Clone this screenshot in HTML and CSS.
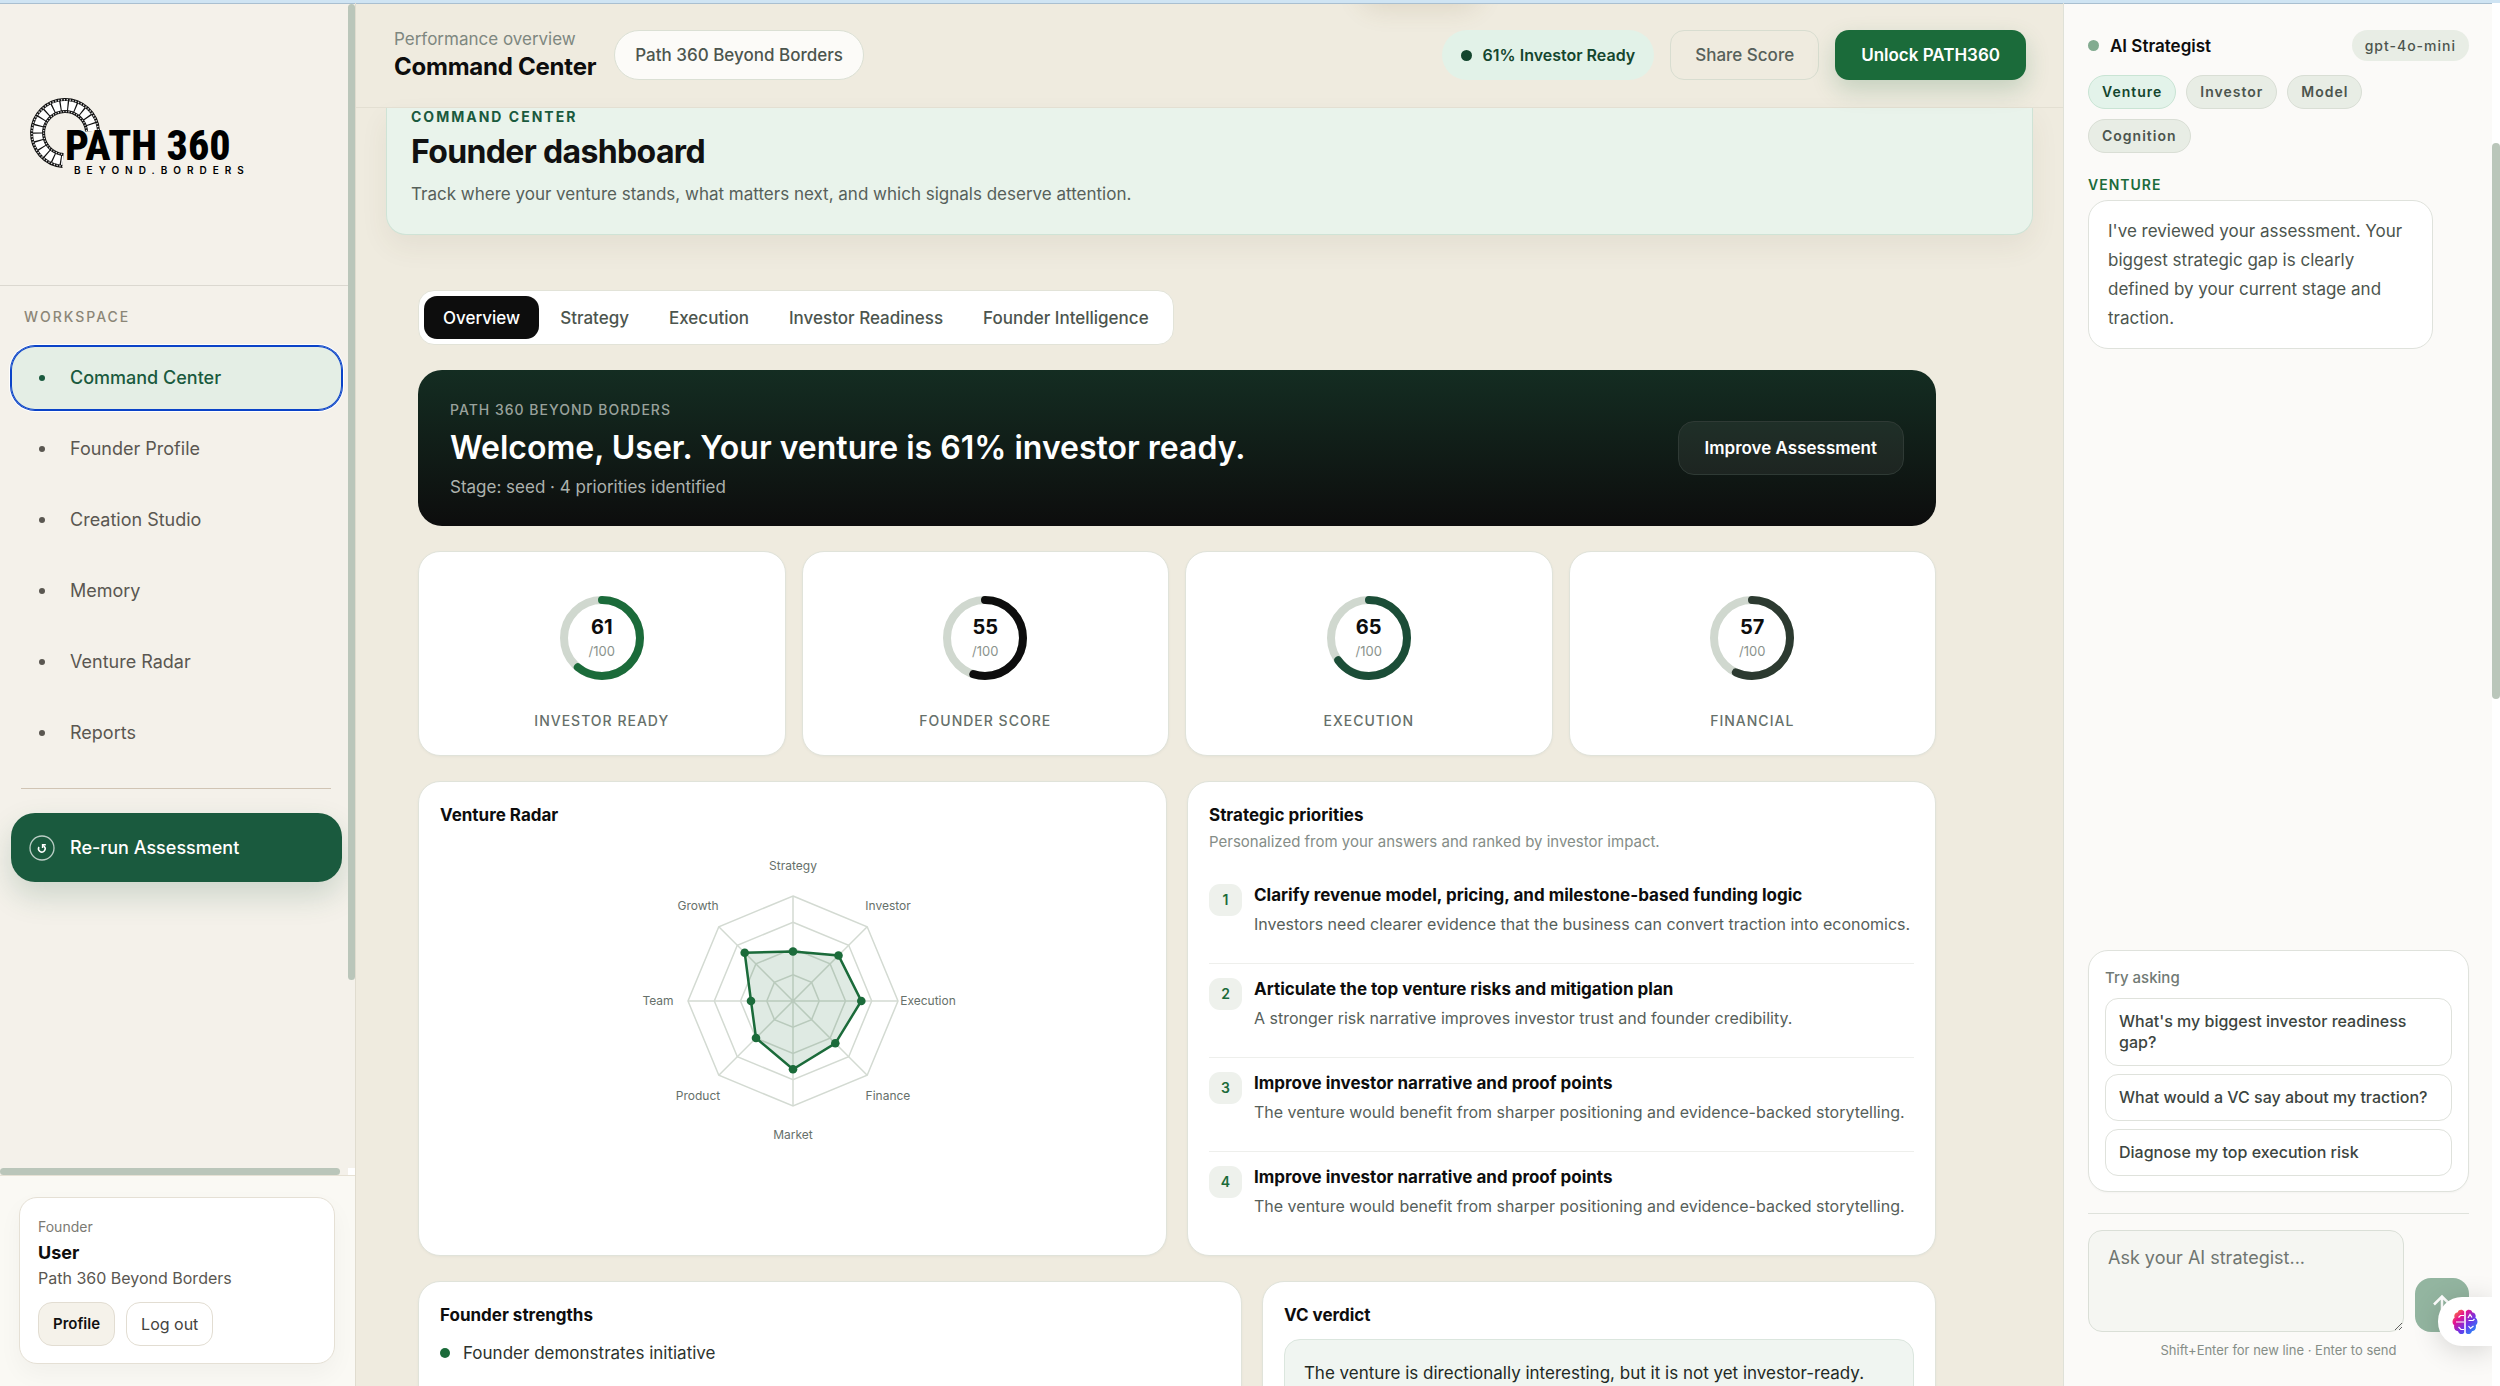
FILE: index.html
```html
<!DOCTYPE html>
<html lang="en">
<head>
    <meta charset="utf-8">
    <title>Command Center - PATH 360</title>
    <link rel="stylesheet" href="styles.css">
</head>
<body>
    <div class="app">
        <!-- Sidebar -->
        <aside class="sidebar">
            <div class="sidebar-scroll">
                <div class="brand">
                    <svg class="brand-logo" viewBox="0 0 230 80" role="img" aria-label="PATH 360 Beyond Borders">
                        <g fill="none">
                            <path d="M63.500 34 A27.500 27.500 0 1 0 34 63.400" stroke="#111" stroke-width="15"/>
                            <path d="M63.500 34 A27.500 27.500 0 1 0 34 63.400" stroke="#fff" stroke-width="9" stroke-dasharray="6.500 1.200"/>
                            <path d="M69.300 33 A33.300 33.300 0 1 0 34 69.200" stroke="#ddd" stroke-width="1.500" stroke-dasharray="1.300 1.600"/>
                            <path d="M57.500 34 A21.500 21.500 0 1 0 34 57.400" stroke="#ddd" stroke-width="1.300" stroke-dasharray="1.200 1.500"/>
                        </g>
                        <text x="36" y="63" class="brand-name">PATH 360</text>
                        <text x="45" y="77" class="brand-sub">BEYOND.BORDERS</text>
                    </svg>
                </div>
                <nav class="nav">
                    <h2 class="nav-title">Workspace</h2>
                    <a class="nav-item active" href="#command"><span class="nav-dot"></span>Command Center</a>
                    <a class="nav-item" href="#profile"><span class="nav-dot"></span>Founder Profile</a>
                    <a class="nav-item" href="#studio"><span class="nav-dot"></span>Creation Studio</a>
                    <a class="nav-item" href="#memory"><span class="nav-dot"></span>Memory</a>
                    <a class="nav-item" href="#radar"><span class="nav-dot"></span>Venture Radar</a>
                    <a class="nav-item" href="#reports"><span class="nav-dot"></span>Reports</a>
                    <hr class="nav-divider">
                    <button class="rerun" type="button">
                        <svg width="26" height="26" viewBox="0 0 26 26" fill="none" stroke="#fff">
                            <circle cx="13" cy="13" r="12" stroke-opacity=".7" stroke-width="1.300"/>
                            <path d="M10 12 A3.300 3.300 0 1 0 15.300 11.500 L14 10.500" stroke-width="1.500"/>
                            <path d="M16.800 9.800 H13.600 V13" stroke-width="1.500"/>
                        </svg>
                        Re-run Assessment
                    </button>
                </nav>
                <span class="thumb thumb-y"></span>
                <span class="thumb thumb-x"></span>
                <span class="thumb-corner"></span>
            </div>
            <div class="sidebar-footer">
                <div class="user-card">
                    <span class="user-role">Founder</span>
                    <strong class="user-name">User</strong>
                    <span class="user-org">Path 360 Beyond Borders</span>
                    <div class="user-actions">
                        <button class="small-btn filled" type="button">Profile</button>
                        <button class="small-btn" type="button">Log out</button>
                    </div>
                </div>
            </div>
        </aside>

        <!-- Main -->
        <main class="main">
            <header class="topbar">
                <div class="topbar-title">
                    <span>Performance overview</span>
                    <strong>Command Center</strong>
                </div>
                <span class="org-pill">Path 360 Beyond Borders</span>
                <div class="topbar-actions">
                    <span class="ready-pill"><i></i>61% Investor Ready</span>
                    <button class="share-btn" type="button">Share Score</button>
                    <button class="unlock-btn" type="button">Unlock PATH360</button>
                </div>
                <span class="toast-shadow"></span>
            </header>

            <div class="page">
                <section class="intro">
                    <span class="intro-tag">Command Center</span>
                    <h1>Founder dashboard</h1>
                    <p>Track where your venture stands, what matters next, and which signals deserve attention.</p>
                </section>

                <div class="content">
                    <div class="tabs" role="tablist">
                        <button class="tab active" role="tab" aria-selected="true">Overview</button>
                        <button class="tab" role="tab">Strategy</button>
                        <button class="tab" role="tab">Execution</button>
                        <button class="tab" role="tab">Investor Readiness</button>
                        <button class="tab" role="tab">Founder Intelligence</button>
                    </div>

                    <section class="welcome">
                        <div>
                            <span class="welcome-tag">Path 360 Beyond Borders</span>
                            <h2>Welcome, User. Your venture is 61% investor ready.</h2>
                            <p>Stage: seed · 4 priorities identified</p>
                        </div>
                        <button class="improve-btn" type="button">Improve Assessment</button>
                    </section>

                    <section class="scores">
                        <article class="card score">
                            <div class="ring">
                                <svg viewBox="0 0 84 84">
                                    <circle class="ring-track" cx="42" cy="42" r="38"/>
                                    <circle class="ring-value green" cx="42" cy="42" r="38" pathLength="100" stroke-dasharray="61 100"/>
                                </svg>
                                <div class="ring-text"><b>61</b><small>/100</small></div>
                            </div>
                            <span class="score-label">Investor Ready</span>
                        </article>
                        <article class="card score">
                            <div class="ring">
                                <svg viewBox="0 0 84 84">
                                    <circle class="ring-track" cx="42" cy="42" r="38"/>
                                    <circle class="ring-value black" cx="42" cy="42" r="38" pathLength="100" stroke-dasharray="55 100"/>
                                </svg>
                                <div class="ring-text"><b>55</b><small>/100</small></div>
                            </div>
                            <span class="score-label">Founder Score</span>
                        </article>
                        <article class="card score">
                            <div class="ring">
                                <svg viewBox="0 0 84 84">
                                    <circle class="ring-track" cx="42" cy="42" r="38"/>
                                    <circle class="ring-value forest" cx="42" cy="42" r="38" pathLength="100" stroke-dasharray="65 100"/>
                                </svg>
                                <div class="ring-text"><b>65</b><small>/100</small></div>
                            </div>
                            <span class="score-label">Execution</span>
                        </article>
                        <article class="card score">
                            <div class="ring">
                                <svg viewBox="0 0 84 84">
                                    <circle class="ring-track" cx="42" cy="42" r="38"/>
                                    <circle class="ring-value olive" cx="42" cy="42" r="38" pathLength="100" stroke-dasharray="57 100"/>
                                </svg>
                                <div class="ring-text"><b>57</b><small>/100</small></div>
                            </div>
                            <span class="score-label">Financial</span>
                        </article>
                    </section>

                    <section class="row-even">
                        <article class="card panel">
                            <h3>Venture Radar</h3>
                            <svg class="radar" width="360" height="320" viewBox="-180 -160 360 320">
                                <g class="radar-grid">
                                    <path d="M0 -105 L74.200 -74.200 L105 0 L74.200 74.200 L0 105 L-74.200 74.200 L-105 0 L-74.200 -74.200 Z"/>
                                    <path d="M0 -78.700 L55.700 -55.700 L78.700 0 L55.700 55.700 L0 78.700 L-55.700 55.700 L-78.700 0 L-55.700 -55.700 Z"/>
                                    <path d="M0 -52.500 L37.100 -37.100 L52.500 0 L37.100 37.100 L0 52.500 L-37.100 37.100 L-52.500 0 L-37.100 -37.100 Z"/>
                                    <path d="M0 -26.200 L18.600 -18.600 L26.200 0 L18.600 18.600 L0 26.200 L-18.600 18.600 L-26.200 0 L-18.600 -18.600 Z"/>
                                    <path d="M0 -105 V105 M-105 0 H105 M-74.200 -74.200 L74.200 74.200 M74.200 -74.200 L-74.200 74.200"/>
                                </g>
                                <path class="radar-area" d="M0 -49.500 L45.500 -45.500 L68.300 0 L42.300 42.300 L0 68.300 L-37 37 L-42 0 L-48.300 -48.300 Z"/>
                                <g class="radar-dots">
                                    <circle cx="0" cy="-49.500" r="4.300"/>
                                    <circle cx="45.500" cy="-45.500" r="4.300"/>
                                    <circle cx="68.300" cy="0" r="4.300"/>
                                    <circle cx="42.300" cy="42.300" r="4.300"/>
                                    <circle cx="0" cy="68.300" r="4.300"/>
                                    <circle cx="-37" cy="37" r="4.300"/>
                                    <circle cx="-42" cy="0" r="4.300"/>
                                    <circle cx="-48.300" cy="-48.300" r="4.300"/>
                                </g>
                                <g class="radar-labels">
                                    <text x="0" y="-131">Strategy</text>
                                    <text x="95" y="-91">Investor</text>
                                    <text x="135" y="4">Execution</text>
                                    <text x="95" y="99">Finance</text>
                                    <text x="0" y="138">Market</text>
                                    <text x="-95" y="99">Product</text>
                                    <text x="-135" y="4">Team</text>
                                    <text x="-95" y="-91">Growth</text>
                                </g>
                            </svg>
                        </article>
                        <article class="card panel">
                            <h3>Strategic priorities</h3>
                            <p class="panel-sub">Personalized from your answers and ranked by investor impact.</p>
                            <ol class="priorities">
                                <li>
                                    <span class="rank">1</span>
                                    <div>
                                        <h4>Clarify revenue model, pricing, and milestone-based funding logic</h4>
                                        <p>Investors need clearer evidence that the business can convert traction into economics.</p>
                                    </div>
                                </li>
                                <li>
                                    <span class="rank">2</span>
                                    <div>
                                        <h4>Articulate the top venture risks and mitigation plan</h4>
                                        <p>A stronger risk narrative improves investor trust and founder credibility.</p>
                                    </div>
                                </li>
                                <li>
                                    <span class="rank">3</span>
                                    <div>
                                        <h4>Improve investor narrative and proof points</h4>
                                        <p>The venture would benefit from sharper positioning and evidence-backed storytelling.</p>
                                    </div>
                                </li>
                                <li>
                                    <span class="rank">4</span>
                                    <div>
                                        <h4>Improve investor narrative and proof points</h4>
                                        <p>The venture would benefit from sharper positioning and evidence-backed storytelling.</p>
                                    </div>
                                </li>
                            </ol>
                        </article>
                    </section>

                    <section class="row-wide">
                        <article class="card panel">
                            <h3>Founder strengths</h3>
                            <ul class="strengths">
                                <li>Founder demonstrates initiative</li>
                            </ul>
                        </article>
                        <article class="card panel">
                            <h3>VC verdict</h3>
                            <p class="verdict">The venture is directionally interesting, but it is not yet investor-ready.</p>
                        </article>
                    </section>
                </div>
            </div>
        </main>

        <!-- AI chat -->
        <aside class="chat">
            <div class="chat-head">
                <i class="chat-status"></i>
                <h2>AI Strategist</h2>
                <span class="model">gpt-4o-mini</span>
            </div>
            <div class="modes">
                <button class="mode active" type="button">Venture</button>
                <button class="mode" type="button">Investor</button>
                <button class="mode" type="button">Model</button>
                <button class="mode" type="button">Cognition</button>
            </div>
            <div class="messages">
                <span class="msg-from">Venture</span>
                <p class="msg">I've reviewed your assessment. Your biggest strategic gap is clearly defined by your current stage and traction.</p>
            </div>
            <div class="suggest">
                <span class="suggest-title">Try asking</span>
                <button type="button">What's my biggest investor readiness gap?</button>
                <button type="button">What would a VC say about my traction?</button>
                <button type="button">Diagnose my top execution risk</button>
            </div>
            <form class="composer">
                <div class="composer-row">
                    <textarea aria-label="Ask your AI strategist" placeholder="Ask your AI strategist..."></textarea>
                    <button class="send" type="button" aria-label="Send">
                        <svg width="20" height="22" viewBox="0 0 20 22" fill="none" stroke="#fff" stroke-width="2.500">
                            <path d="M10 21 V3 M2 10.500 L10 2.500 L18 10.500"/>
                        </svg>
                    </button>
                </div>
                <p class="hint">Shift+Enter for new line · Enter to send</p>
            </form>
            <span class="thumb thumb-page"></span>
            <button class="assistant" type="button" aria-label="Assistant">
                <svg width="26" height="26" viewBox="0 0 26 26">
                    <defs>
                        <linearGradient id="brain" x1="0" y1="0" x2="1" y2="1">
                            <stop offset="0" stop-color="#ff9a1f"/>
                            <stop offset=".3" stop-color="#e6128f"/>
                            <stop offset=".6" stop-color="#6b35e8"/>
                            <stop offset="1" stop-color="#12a5ff"/>
                        </linearGradient>
                    </defs>
                    <path fill="url(#brain)" d="M12.200 2.500 C10.500 0 6.500 .5 5.800 3.200 C3 3.500 1.600 6.300 2.600 8.700 C0 10.500 -.2 14.500 2.200 16.300 C1.500 19.500 3.300 22 6 22.200 C7 25.500 11 26 12.200 23.500 Z M13.800 2.500 C15.500 0 19.500 .5 20.200 3.200 C23 3.500 24.400 6.300 23.400 8.700 C26 10.500 26.200 14.500 23.800 16.300 C24.500 19.500 22.700 22 20 22.200 C19 25.500 15 26 13.800 23.500 Z"/>
                    <path fill="none" stroke="#fff" stroke-width="1.200" d="M12 6.500 H8.500 L6.500 8.500 M12 13 H4 M12 20.500 H9 L6.500 18 M16 9 L18 5.500 L20 8.500 M16.500 11.500 H21 L22.500 10 M16.500 17 L18.500 19.500 L21.500 17"/>
                </svg>
            </button>
        </aside>
    </div>
</body>
</html>
```
FILE: styles.css
```css
* {
    box-sizing: border-box;
}

body {
    margin: 0;
    font-family: Inter, "Open Sans", sans-serif;
    font-size: 17px;
    line-height: 24px;
    color: #0d0d0d;
    background: #efebdf;
}

h1, h2, h3, h4, p, ul, ol {
    margin: 0;
    padding: 0;
}

button, textarea {
    font: inherit;
    color: inherit;
    cursor: pointer;
}

.app {
    display: grid;
    grid-template-columns: 356px 1fr 437px;
    height: 100vh;
    border-top: 3px solid #cfe4f3;
    overflow: hidden;
}

/* Sidebar */
.sidebar {
    display: flex;
    flex-direction: column;
    min-height: 0;
    border-right: 1px solid #e0dccf;
    background: #f4f1ea;
    box-shadow: inset 0 1px #a9bfd0;
}

.sidebar-scroll {
    position: relative;
    flex: 1;
    min-height: 0;
    overflow: hidden;
}

.brand {
    height: 283px;
    padding: 94px 29px 0;
    border-bottom: 1px solid #dbd8d0;
}

.brand-logo {
    display: block;
    width: 230px;
    height: 80px;
}

.brand-name {
    font: 800 42px "Roboto Condensed", Roboto, sans-serif;
}

.brand-sub {
    font: 600 10px Inter, sans-serif;
    letter-spacing: 6px;
}

.nav {
    display: flex;
    flex-direction: column;
    gap: 7px;
    padding: 19px 13px 0 11px;
}

.nav-title {
    margin: 0 0 10px 13px;
    font-size: 14px;
    font-weight: 500;
    letter-spacing: 2px;
    text-transform: uppercase;
    color: #8b8677;
}

.nav-item {
    display: flex;
    align-items: center;
    height: 64px;
    padding-left: 28px;
    border-radius: 24px;
    font-size: 18px;
    color: #5a5751;
    text-decoration: none;
}

.nav-item.active {
    font-weight: 500;
    color: #1a5a3e;
    background: #e4eee5;
    box-shadow: 0 0 0 1px #0a43c8, inset 0 0 0 1px #0a43c8, 0 0 0 2px #fff;
}

.nav-dot {
    width: 6px;
    height: 6px;
    margin-right: 25px;
    border-radius: 50%;
    background: currentColor;
}

.nav-divider {
    width: 310px;
    height: 1px;
    margin: 16px 10px 17px;
    border: 0;
    background: #d0c4b4;
}

.rerun {
    display: flex;
    align-items: center;
    gap: 15px;
    height: 69px;
    padding: 0 18px;
    border: 0;
    border-radius: 24px;
    font-size: 18px;
    font-weight: 500;
    color: #fff;
    background: #1a5a3e;
    box-shadow: 0 14px 30px rgba(26, 90, 62, .18);
}

.thumb {
    position: absolute;
    border-radius: 4px;
    background: #bac6ba;
}

.thumb-y {
    top: 1px;
    right: 0;
    width: 7px;
    height: 976px;
}

.thumb-x {
    left: 0;
    bottom: 0;
    width: 340px;
    height: 7px;
}

.thumb-corner {
    position: absolute;
    right: 0;
    bottom: 0;
    width: 7px;
    height: 7px;
    background: #fff;
}

.sidebar-footer {
    padding: 21px 20px 22px 19px;
    border-top: 1px solid #e6e1d4;
    background: #faf9f4;
}

.user-card {
    display: flex;
    flex-direction: column;
    padding: 17px 18px;
    border: 1px solid #e5e0d5;
    border-radius: 18px;
    background: #fff;
    box-shadow: 0 10px 24px rgba(0, 0, 0, .04);
}

.user-role {
    font-size: 14px;
    color: #7b7a73;
}

.user-name {
    font-size: 18px;
    line-height: 28px;
}

.user-org {
    font-size: 16px;
    line-height: 22px;
    color: #5a5751;
}

.user-actions {
    display: flex;
    gap: 11px;
    margin-top: 13px;
}

.small-btn {
    height: 44px;
    padding: 0 14px;
    border: 1px solid #e2ddd2;
    border-radius: 14px;
    font-size: 16px;
    color: #44433f;
    background: #fff;
}

.small-btn.filled {
    font-size: 15px;
    font-weight: 600;
    color: #111;
    background: #f5f2ea;
}

/* Main */
.main {
    display: flex;
    flex-direction: column;
    min-width: 0;
    min-height: 0;
    overflow: hidden;
}

.topbar {
    position: relative;
    z-index: 1;
    display: flex;
    flex-shrink: 0;
    align-items: center;
    gap: 18px;
    height: 105px;
    padding: 0 37px 0 38px;
    border-bottom: 1px solid #e3dfd2;
    box-shadow: inset 0 1px #a9bfd0;
}

.topbar-title {
    display: flex;
    flex-direction: column;
}

.topbar-title span {
    color: #7e877f;
}

.topbar-title strong {
    font-size: 24px;
    line-height: 32px;
    letter-spacing: -.01em;
}

.org-pill {
    padding: 12px 20px;
    border: 1px solid #dbe0d4;
    border-radius: 26px;
    font-weight: 500;
    color: #4c554e;
    background: #fcfbf8;
}

.topbar-actions {
    display: flex;
    align-items: center;
    gap: 16px;
    margin-left: auto;
}

.ready-pill {
    display: flex;
    align-items: center;
    gap: 11px;
    height: 50px;
    padding: 0 19px;
    border-radius: 25px;
    font-size: 16px;
    font-weight: 600;
    color: #14462e;
    background: #e2f2e8;
}

.ready-pill i {
    width: 11px;
    height: 11px;
    border-radius: 50%;
    background: #14462e;
}

.share-btn, .unlock-btn {
    height: 50px;
    padding: 0 24px;
    border: 1px solid #d8ddd0;
    border-radius: 14px;
    font-weight: 500;
    color: #56605a;
    background: none;
}

.unlock-btn {
    padding: 0 26px;
    border: 0;
    font-weight: 600;
    color: #fff;
    background: #1b6b3a;
    box-shadow: 0 10px 24px rgba(27, 107, 58, .2);
}

.toast-shadow {
    position: absolute;
    top: -40px;
    left: 1004px;
    width: 120px;
    height: 40px;
    border-radius: 20px;
    box-shadow: 0 6px 26px rgba(120, 90, 40, .14);
    clip-path: inset(41px -40px -50px);
}

.page {
    padding: 0 30px;
}

.intro {
    padding: 0 24px 26px;
    border: 1px solid #cfe3d6;
    border-top: 0;
    border-radius: 0 0 20px 20px;
    background: #e9f3eb;
    box-shadow: 0 12px 28px rgba(90, 70, 40, .07);
}

.intro-tag {
    display: block;
    padding-top: 1px;
    font-size: 14px;
    font-weight: 700;
    line-height: 16px;
    letter-spacing: 2px;
    text-transform: uppercase;
    color: #1a5a3e;
}

.intro h1 {
    margin-top: 7px;
    font-size: 32px;
    line-height: 40px;
    letter-spacing: -.02em;
    color: #111;
}

.intro p {
    margin-top: 8px;
    line-height: 28px;
    color: #56605a;
}

.content {
    display: flex;
    flex-direction: column;
    gap: 25px;
    max-width: 1550px;
    padding: 55px 0 0 32px;
}

.tabs {
    display: flex;
    align-self: flex-start;
    gap: 2px;
    padding: 5px;
    border: 1px solid #e2e3d8;
    border-radius: 16px;
    background: #fff;
}

.tab {
    height: 43px;
    padding: 0 19px;
    border: 0;
    border-radius: 13px;
    font-weight: 500;
    color: #4c554e;
    background: none;
}

.tab.active {
    color: #fff;
    background: #0d0d0d;
}

.welcome {
    display: flex;
    align-items: center;
    justify-content: space-between;
    height: 156px;
    padding: 0 32px;
    border-radius: 24px;
    color: #fff;
    background: linear-gradient(#142d22, #0d0d0d);
}

.welcome-tag {
    font-size: 14px;
    font-weight: 500;
    letter-spacing: 1px;
    text-transform: uppercase;
    color: #9aa29c;
}

.welcome h2 {
    margin: 5px 0 6px;
    font-size: 32px;
    font-weight: 600;
    line-height: 42px;
}

.welcome p {
    color: #adb2ae;
}

.improve-btn {
    height: 54px;
    padding: 0 26px;
    border: 1px solid #2f3a35;
    border-radius: 16px;
    font-weight: 600;
    background: rgba(255, 255, 255, .06);
}

.card {
    border: 1px solid #e0e3da;
    border-radius: 22px;
    background: #fff;
    box-shadow: 0 1px 3px rgba(0, 0, 0, .04);
}

.scores {
    display: grid;
    grid-template-columns: repeat(4, 1fr);
    gap: 16px;
}

.score {
    display: flex;
    flex-direction: column;
    align-items: center;
    gap: 29px;
    padding: 44px 20px 22px;
}

.ring {
    display: grid;
    width: 84px;
    height: 84px;
}

.ring svg, .ring-text {
    grid-area: 1 / 1;
}

.ring circle {
    fill: none;
    stroke-width: 8;
}

.ring-track {
    stroke: #d0d8cf;
}

.ring-value {
    stroke-linecap: round;
    transform: rotate(-90deg);
    transform-origin: center;
}

.green { stroke: #1b6b3a; }
.black { stroke: #0d0d0d; }
.forest { stroke: #1b4d37; }
.olive { stroke: #2c3a30; }

.ring-text {
    display: flex;
    flex-direction: column;
    align-items: center;
    padding-top: 18px;
}

.ring-text b {
    font-size: 20px;
    line-height: 26px;
}

.ring-text small {
    font-size: 13px;
    line-height: 22px;
    color: #8b938d;
}

.score-label {
    font-size: 14px;
    font-weight: 500;
    letter-spacing: 1px;
    text-transform: uppercase;
    color: #66706a;
}

.row-even, .row-wide {
    display: grid;
    grid-template-columns: 1fr 1fr;
    gap: 20px;
}

.row-wide {
    grid-template-columns: 1.1fr .9fr;
}

.panel {
    min-height: 150px;
    padding: 21px;
}

.panel h3 {
    font-size: 17px;
    font-weight: 700;
}

.radar {
    display: block;
    margin: 14px auto 0;
}

.radar-grid {
    fill: none;
    stroke: #d3dad2;
    stroke-width: 1.5;
}

.radar-area {
    fill: #1b6b3a;
    fill-opacity: .14;
    stroke: #1b6b3a;
    stroke-width: 2.5;
}

.radar-dots {
    fill: #1b6b3a;
}

.radar-labels {
    font-size: 12px;
    text-anchor: middle;
    fill: #66706a;
}

.panel-sub {
    margin-top: 3px;
    font-size: 15px;
    color: #858d87;
}

.priorities {
    margin-top: 16px;
    list-style: none;
}

.priorities li {
    display: flex;
    gap: 12px;
    height: 94px;
    padding-top: 14px;
    border-bottom: 1px solid #eeefec;
}

.priorities li:last-child {
    height: 82px;
    border: 0;
}

.rank {
    width: 33px;
    height: 32px;
    border-radius: 11px;
    font-size: 14px;
    font-weight: 600;
    line-height: 32px;
    text-align: center;
    color: #1b6b3a;
    background: #eef1ec;
}

.priorities h4 {
    font-size: 17px;
    font-weight: 700;
    line-height: 23px;
}

.priorities p {
    margin-top: 5px;
    font-size: 16px;
    color: #56605a;
}

.strengths {
    margin-top: 12px;
    list-style: none;
}

.strengths li {
    display: flex;
    align-items: center;
    gap: 13px;
    line-height: 28px;
    color: #2c332e;
}

.strengths li::before {
    content: "";
    width: 10px;
    height: 10px;
    border-radius: 50%;
    background: #1b6b3a;
}

.verdict {
    margin-top: 12px;
    padding: 18px 19px;
    border: 1px solid #dbe6de;
    border-radius: 16px;
    line-height: 30px;
    color: #222924;
    background: #f0f5f1;
}

/* AI chat */
.chat {
    position: relative;
    display: flex;
    flex-direction: column;
    min-height: 0;
    padding: 27px 23px 24px 24px;
    border-left: 1px solid #dfe1d8;
    border-right: 8px solid #fff;
    background: #fbfaf8;
    box-shadow: inset 0 1px #a9bfd0;
}

.chat-head {
    display: flex;
    align-items: center;
    height: 31px;
}

.chat-status {
    width: 11px;
    height: 11px;
    margin-right: 11px;
    border-radius: 50%;
    background: #82ab90;
}

.chat-head h2 {
    font-size: 17px;
    font-weight: 600;
}

.model {
    height: 31px;
    margin-left: auto;
    padding: 0 13px;
    border-radius: 16px;
    font-size: 14px;
    font-weight: 500;
    line-height: 31px;
    letter-spacing: 1px;
    color: #4c554e;
    background: #e8ede5;
}

.modes {
    display: flex;
    flex-wrap: wrap;
    gap: 10px;
    margin-top: 14px;
}

.mode {
    height: 34px;
    padding: 0 13px;
    border: 1px solid #d9ded5;
    border-radius: 17px;
    font-size: 14px;
    font-weight: 600;
    letter-spacing: 1px;
    color: #4c554e;
    background: #e8ede5;
}

.mode.active {
    border-color: #c9e4d4;
    color: #14462e;
    background: #e3f3ea;
}

.messages {
    flex: 1;
    padding-top: 19px;
}

.msg-from {
    font-size: 14px;
    font-weight: 600;
    letter-spacing: 1px;
    text-transform: uppercase;
    color: #1b6b3a;
}

.msg {
    width: 345px;
    margin-top: 3px;
    padding: 16px 19px 15px;
    border: 1px solid #dfe2dc;
    border-radius: 20px;
    line-height: 29px;
    color: #4c554e;
    background: #fff;
}

.suggest {
    display: flex;
    flex-direction: column;
    gap: 8px;
    padding: 15px 16px;
    border: 1px solid #dfe2dc;
    border-radius: 20px;
    background: #fff;
    box-shadow: 0 1px 2px rgba(0, 0, 0, .03);
}

.suggest-title {
    font-size: 15px;
    font-weight: 500;
    color: #717a74;
}

.suggest button {
    padding: 12px 13px;
    border: 1px solid #dfe2dc;
    border-radius: 13px;
    font-size: 16px;
    font-weight: 500;
    line-height: 21px;
    text-align: left;
    color: #3c453f;
    background: #fff;
}

.composer {
    margin-top: 21px;
    padding-top: 16px;
    border-top: 1px solid #dfe2dc;
}

.composer-row {
    display: flex;
    align-items: flex-end;
    gap: 11px;
}

.composer textarea {
    flex: 1;
    min-width: 0;
    height: 102px;
    padding: 15px 19px;
    border: 1px solid #dadfd7;
    border-radius: 14px;
    font-size: 18px;
    background: #f5f6f2;
}

.composer textarea::placeholder {
    color: #6f7570;
}

.send {
    display: grid;
    place-items: center;
    width: 54px;
    height: 54px;
    border: 0;
    border-radius: 16px;
    background: #93b5a0;
}

.hint {
    margin-top: 6px;
    font-size: 13px;
    text-align: center;
    color: #858d87;
}

.thumb-page {
    top: 140px;
    right: -8px;
    width: 8px;
    height: 556px;
}

.assistant {
    position: absolute;
    right: 0;
    bottom: 40px;
    display: grid;
    place-items: center;
    width: 54px;
    height: 49px;
    padding: 0;
    border: 0;
    border-radius: 24px 0 0 24px;
    background: #fff;
    box-shadow: 0 4px 28px rgba(0, 0, 0, .16);
    clip-path: inset(-50px 0 -50px -50px);
}
```
